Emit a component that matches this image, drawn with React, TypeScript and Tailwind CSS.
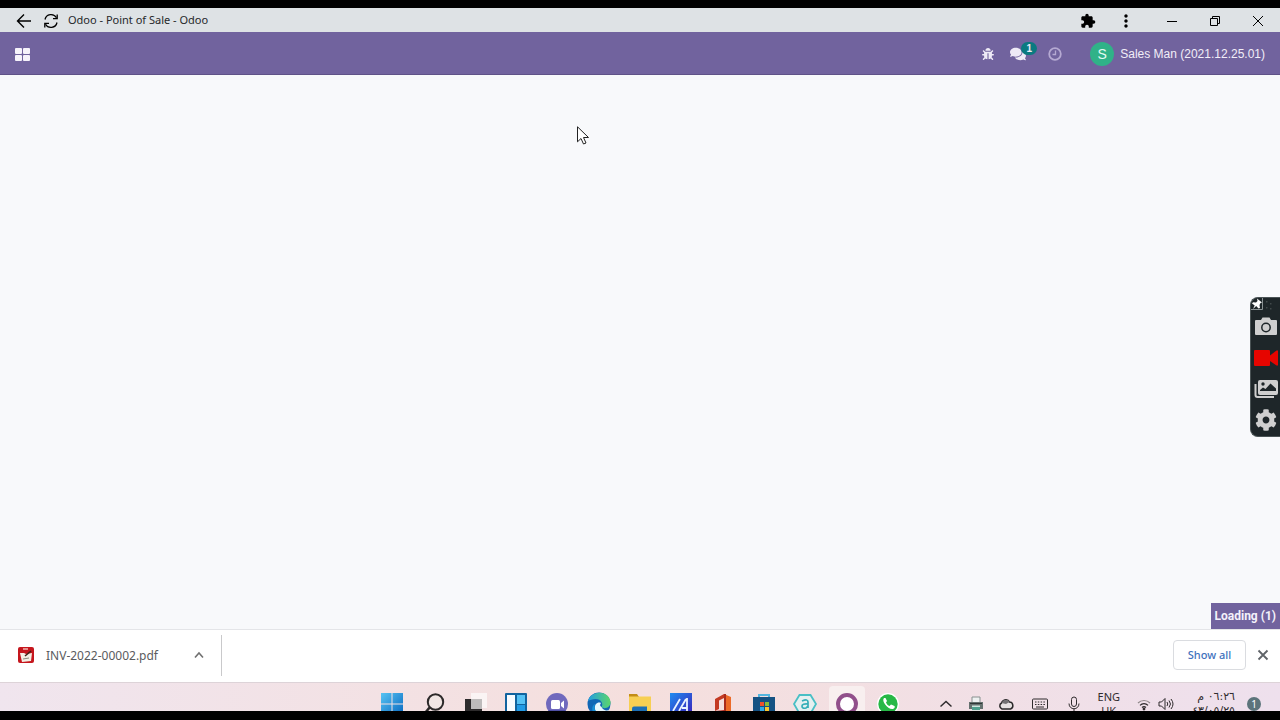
import React from "react";
import { FaBug, FaComments, FaCog } from "react-icons/fa";
import { MdExtension, MdMoreVert } from "react-icons/md";

/* ================= TITLE BAR ================= */
const TitleBar: React.FC = () => (
  <header className="flex h-6 shrink-0 items-center bg-[#dee2e5] pt-px pl-4 text-black">
    <button aria-label="Back" className="w-4">
      <svg viewBox="0 0 16 16" className="h-4 w-4" fill="none" stroke="currentColor" strokeWidth="1.4">
        <path d="M15 8H1.5M8 1.5 1.5 8 8 14.5" />
      </svg>
    </button>
    <button aria-label="Reload" className="ml-[11px] w-4">
      <svg viewBox="0 0 16 16" className="h-4 w-4" fill="none" stroke="currentColor" strokeWidth="1.3">
        <path d="M2 6.5a6.2 6.2 0 0 1 11.5-1.7M14 9.5A6.2 6.2 0 0 1 2.5 11.2" />
        <path d="M14.2 1.5v4.2H10M1.8 14.5v-4.2H6" />
      </svg>
    </button>
    <h1 className="ml-[9px] flex-1 font-['Noto_Sans',sans-serif] text-[11px] text-[#26282a]">Odoo - Point of Sale - Odoo</h1>
    <button aria-label="Extensions" className="w-4">
      <MdExtension className="h-4 w-4" />
    </button>
    <button aria-label="Menu" className="ml-5 w-5">
      <MdMoreVert className="h-5 w-5" />
    </button>
    <div className="mr-px ml-[14px] flex">
      <button aria-label="Minimize" className="flex w-[43px] justify-center">
        <svg viewBox="0 0 12 12" className="h-3 w-3" stroke="currentColor"><path d="M1 6.5h10" /></svg>
      </button>
      <button aria-label="Restore" className="flex w-[43px] justify-center">
        <svg viewBox="0 0 12 12" className="h-3 w-3" fill="none" stroke="currentColor">
          <path d="M1.500 3.500h7v7h-7zM3.500 3.500v-2h7v7h-2" />
        </svg>
      </button>
      <button aria-label="Close" className="flex w-[43px] justify-center">
        <svg viewBox="0 0 12 12" className="h-3 w-3" stroke="currentColor"><path d="m1 1 10 10M11 1 1 11" /></svg>
      </button>
    </div>
  </header>
);

/* ================= ODOO NAVBAR ================= */
const Navbar: React.FC = () => (
  <nav className="flex h-[43px] shrink-0 items-center border-b border-[#5f5287] bg-[#71639e] pt-[2px] pr-[15px] pl-[15px] font-['Liberation_Sans',sans-serif] text-white">
    <button aria-label="Apps" className="mr-auto">
      <svg viewBox="0 0 15 13" className="h-[13px] w-[15px]" fill="#f6f3fb">
        <rect width="7" height="6" rx="1" />
        <rect x="8" width="7" height="6" rx="1" />
        <rect y="7" width="7" height="6" rx="1" />
        <rect x="8" y="7" width="7" height="6" rx="1" />
      </svg>
    </button>
    <button aria-label="Debug" className="text-[#eeeaf6]">
      <FaBug className="h-3 w-3" />
    </button>
    <button aria-label="Messages" className="relative ml-4 text-[#eeeaf6]">
      <FaComments className="h-4 w-4" />
      <span className="absolute -top-1 left-[11px] flex h-[13px] w-4 items-center justify-center rounded-full bg-[#0b7a80] text-[10px] font-bold">1</span>
    </button>
    <button aria-label="Activities" className="ml-[22px] text-[#b5a9d2]">
      <svg viewBox="0 0 14 14" className="h-[14px] w-[14px]" fill="none" stroke="currentColor">
        <circle cx="7" cy="7" r="5.800" strokeWidth="1.800" />
        <path d="M7.500 3.500v4H4.500" strokeWidth="1.300" />
      </svg>
    </button>
    <button className="ml-7 flex items-center gap-[6px] text-[12px]">
      <span className="flex h-6 w-6 items-center justify-center rounded-full bg-[#30b288] text-[14px] text-[#e3fbf2]">S</span>
      <span className="text-[#f1eef8]">Sales Man (2021.12.25.01)</span>
    </button>
  </nav>
);

/* ================= RECORDER PANEL ================= */
const Recorder: React.FC = () => (
  <aside className="absolute top-[222px] right-0 flex h-[140px] w-[30px] flex-col items-center gap-[9px] rounded-l-lg border border-r-0 border-[#4a5355] bg-[#1e2629] text-[#cfcfcf]">
    <button aria-label="Pin" className="flex h-[9px] w-full items-start">
      <svg viewBox="0 0 28 12" className="h-3 w-7 shrink-0">
        <path d="M0 11.500h11.500V0" fill="none" stroke="#8a9294" />
        <path d="m6 .5 5 4-1.500.5-1 2 .5 3-1.500.5-2.300-2.500L2 11l1.700-3.500L1 5.500l1-1.200 3 .2L6.500 3z" fill="#fff" />
        <path d="M15 3h1.500v1.500H15zM19 5h1.500v1.500H19zM15 9h1.500v1.500H15zM19 10h1.500v1.500H19z" fill="#41494b" />
      </svg>
    </button>
    <button aria-label="Screenshot">
      <svg viewBox="0 0 22 22" className="h-[22px] w-[22px]">
        <path d="M1 4h5l1.500-2.500h7L16 4h5a1 1 0 0 1 1 1v13a1 1 0 0 1-1 1H1a1 1 0 0 1-1-1V5a1 1 0 0 1 1-1z" fill="currentColor" />
        <circle cx="11" cy="11.500" r="4.200" fill="none" stroke="#1e2629" strokeWidth="1.500" />
      </svg>
    </button>
    <button aria-label="Record" className="text-[#e60500]">
      <svg viewBox="0 0 24 22" className="h-[22px] w-6" fill="currentColor">
        <path d="M1 3h14a1 1 0 0 1 1 1v4.500L22.500 3.500H24v15h-1.500L16 14v4a1 1 0 0 1-1 1H1a1 1 0 0 1-1-1V4a1 1 0 0 1 1-1z" />
      </svg>
    </button>
    <button aria-label="Gallery">
      <svg viewBox="0 0 24 22" className="h-[22px] w-6">
        <path d="M1.500 6v11a2 2 0 0 0 2 2H20" fill="none" stroke="currentColor" strokeWidth="2" />
        <rect x="4" y="2" width="20" height="15" rx="2" fill="currentColor" />
        <circle cx="9" cy="6" r="1.700" fill="#1e2629" />
        <path d="M6 13v-1l3-2.500 2.500 1.500 5-5.500 5.500 5V13z" fill="#1e2629" />
      </svg>
    </button>
    <button aria-label="Settings">
      <FaCog className="h-[22px] w-[22px]" />
    </button>
  </aside>
);

/* ================= DOWNLOADS ================= */
const DownloadBar: React.FC = () => (
  <section className="flex h-[53px] shrink-0 items-center border-t border-[#e4e5e8] bg-white pb-[2px] font-['Noto_Sans',sans-serif] text-[12px]">
    <div className="flex h-[41px] w-[222px] items-center border-r border-[#c9c9cb] pr-4 pl-[18px]">
      <svg viewBox="0 0 16 16" className="h-4 w-4">
        <rect width="16" height="16" rx="2" fill="#c5161d" />
        <path d="M2 6h4l2 1 6-1-1 8-9 1z" fill="#f4efe4" />
        <path d="M5 2h5" stroke="#f2b7b2" strokeWidth="1.500" />
        <path d="m7 9 6-5" stroke="#3f2418" strokeWidth="1.600" />
        <path d="m5 12 6-1" stroke="#8a8d7f" />
      </svg>
      <a href="#invoice" className="ml-3 flex-1 pt-[2px] text-[#5a5b5e]">INV-2022-00002.pdf</a>
      <button aria-label="File options" className="text-[#707070]">
        <svg viewBox="0 0 12 12" className="h-3 w-3" fill="none" stroke="currentColor" strokeWidth="1.600"><path d="m2 8.500 4-4.500 4 4.500" /></svg>
      </button>
    </div>
    <button className="ml-auto h-[30px] w-[73px] rounded border border-[#dadce0] text-[11px] font-medium text-[#3f72bd]">Show all</button>
    <button aria-label="Close downloads" className="mr-[11px] ml-[11px] text-[#5f6368]">
      <svg viewBox="0 0 12 12" className="h-3 w-3" stroke="currentColor" strokeWidth="1.800"><path d="m1.500 1.500 9 9M10.500 1.500l-9 9" /></svg>
    </button>
  </section>
);

/* ================= TASKBAR ================= */
const apps = [
  {
    name: "Start",
    art: (
      <>
        <defs>
          <linearGradient id="win" x1="0" y1="0" x2="1" y2="1"><stop stopColor="#57c4f3" /><stop offset="1" stopColor="#0868c0" /></linearGradient>
        </defs>
        <path d="M0 0h10.500v10.500H0zM11.500 0H22v10.500H11.500zM0 11.500h10.500V22H0zM11.500 11.500H22V22H11.500z" fill="url(#win)" />
      </>
    ),
  },
  {
    name: "Search",
    art: (
      <>
        <circle cx="13.500" cy="9" r="7.700" fill="#f1e6e4" stroke="#2c2929" strokeWidth="2" />
        <path d="m8 14-5 6" stroke="#2c2929" strokeWidth="2.500" />
      </>
    ),
  },
  {
    name: "Task view",
    art: (
      <>
        <path d="M1 6h17v16H1z" fill="#2d2b2c" />
        <path d="M7 0h16v15H7z" fill="#fbf9f9" fillOpacity=".8" />
        <path d="M7 6h11v10H7z" fill="#bdbbbb" />
      </>
    ),
  },
  {
    name: "Widgets",
    art: (
      <>
        <rect width="22" height="22" rx="1" fill="#11649f" />
        <path d="M2 2h8v20H2z" fill="#f8fcff" />
        <path d="M12 2h8v9h-8z" fill="#55c2f5" />
        <path d="M12 12h8v10h-8z" fill="#219be6" />
      </>
    ),
  },
  {
    name: "Chat",
    art: (
      <>
        <circle cx="11" cy="11" r="11" fill="#7069bd" />
        <path d="M2 17a11 11 0 0 0 18 0z" fill="#5050a5" />
        <rect x="5" y="7" width="9" height="9" rx="1.500" fill="#fff" />
        <path d="m15 10 3-2.500v8L15 13z" fill="#fff" />
      </>
    ),
  },
  {
    name: "Edge",
    art: (
      <>
        <defs>
          <linearGradient id="edge" x1="0" y1="0" x2="1" y2="0"><stop stopColor="#239ee0" /><stop offset="1" stopColor="#5bd66b" /></linearGradient>
        </defs>
        <circle cx="11" cy="11" r="11.500" fill="#1267b5" />
        <path d="M0 8C3-3 21-3 22.500 9c.5 5-6 8-9 5 2-3 0-8-6-8-3 0-6 1-7.500 2z" fill="url(#edge)" />
        <path d="M13.500 14c-2-1-1.500-3-.5-4-5-2-8 4-5 9l6 2c4-1 6-2 7-4-3 1-6 0-7.500-3z" fill="#eaf7fc" />
        <path d="M7 11c-2 6 3 11 8 11l-6 .5C3 20 3 13 7 11z" fill="#1990d5" />
      </>
    ),
  },
  {
    name: "File Explorer",
    art: (
      <>
        <path d="M0 1h8l2 3H0z" fill="#c38d16" />
        <path d="M0 3.500h22V20H0z" fill="#f7cf52" />
        <path d="M3 15.500q0-2 2-2h13v7H3z" fill="#1c6fb5" />
      </>
    ),
  },
  {
    name: "MyASUS",
    art: (
      <>
        <defs>
          <linearGradient id="asus" x1="0" y1="0" x2="1" y2="1"><stop stopColor="#1f8cf0" /><stop offset="1" stopColor="#3b21ba" /></linearGradient>
        </defs>
        <path d="M0 0h22v22H0z" fill="url(#asus)" />
        <path d="m3 18 7-12M9 18l7-12M12 15h5M17 5v13" stroke="#eaf4ff" strokeWidth="1.800" />
      </>
    ),
  },
  {
    name: "Office",
    art: (
      <>
        <path d="M3 6 12 1v4L7 7.500V16l-4 2z" fill="#c33a23" />
        <path d="m12 1 7 3v14l-7 4z" fill="#ec6a28" />
        <path d="m12 1 2 0v20l-2 0z" fill="#a92b1c" />
        <path d="m3 18 9-1v4z" fill="#b72c22" />
      </>
    ),
  },
  {
    name: "Microsoft Store",
    art: (
      <>
        <path d="M6 5V2h10v3" fill="none" stroke="#54b6df" strokeWidth="2" />
        <path d="M0 4h22v16a2 2 0 0 1-2 2H2a2 2 0 0 1-2-2z" fill="#155283" />
        <path d="M7 9h4v4H7z" fill="#f0512b" />
        <path d="M12 9h4v4h-4z" fill="#86bd3a" />
        <path d="M7 14h4v4H7z" fill="#31a9e5" />
        <path d="M12 14h4v4h-4z" fill="#fac62f" />
      </>
    ),
  },
  {
    name: "Armoury",
    art: (
      <>
        <path d="M5.500 2h11L22 11l-5.500 9.500h-11L0 11z" fill="#e5f0f0" stroke="#49bfc5" strokeWidth="1.800" />
        <path d="M8 8q6-2.500 6 1v6m0-4q-6-.5-6 2 0 3 4 2l2-2" fill="none" stroke="#35afb8" strokeWidth="1.700" />
      </>
    ),
  },
  {
    name: "Odoo",
    active: true,
    art: <circle cx="11" cy="11" r="9" fill="#fff" stroke="#91508b" strokeWidth="4" />,
  },
  {
    name: "WhatsApp",
    art: (
      <>
        <circle cx="11" cy="11" r="11" fill="#fff" />
        <circle cx="11" cy="11" r="9.700" fill="#27b846" />
        <path d="M7 5c-3 3 4 12 9 11 2-1 2-2 1.500-3L14 11.500l-1.500 1.500C11 12.500 9.500 11 9 9.500L10 8 8.500 5z" fill="#fff" />
      </>
    ),
  },
];

const Tray: React.FC = () => (
  <div className="flex items-center justify-end pr-[19px] text-[#2f2b2d]">
    <button aria-label="Hidden icons">
      <svg viewBox="0 0 12 12" className="h-3 w-3" fill="none" stroke="currentColor" strokeWidth="1.500"><path d="m.5 8.500 5.500-5 5.500 5" /></svg>
    </button>
    <svg viewBox="0 0 16 16" className="ml-4 h-4 w-4">
      <path d="M4 1h8v6H4z" fill="#eef1f1" stroke="#889190" />
      <path d="M1 6h14v7H1z" fill="#65716f" />
      <path d="M4 9.500h8v5H4z" fill="#cfe6df" />
      <path d="M4 11h8v3H4z" fill="#4fa08e" />
      <path d="M2 7.500h12" stroke="#303737" />
    </svg>
    <svg viewBox="0 0 16 16" className="ml-[14px] h-4 w-4">
      <path d="M4 13a3.300 3.300 0 0 1-.5-6C5 3 10 2.500 11.500 6c4 0 4.500 6 1 7z" fill="#e6e1e1" stroke="#2a2829" strokeWidth="1.500" />
      <path d="M3.500 7C5 3 10 2.500 11.500 6L8 8z" fill="#737173" />
    </svg>
    <svg viewBox="0 0 16 16" className="ml-[18px] h-4 w-4" fill="none" stroke="currentColor">
      <rect x=".5" y="3" width="15" height="10" rx="1" />
      <path d="M3 6h10M3 8.500h10" strokeDasharray="1.500 1.300" />
      <path d="M4 11h8" />
    </svg>
    <svg viewBox="0 0 16 16" className="ml-[18px] h-4 w-4" fill="none" stroke="currentColor">
      <rect x="5.500" y="1" width="5" height="9.500" rx="2.500" />
      <path d="M3 7.500c0 7 10 7 10 0M8 13v3" />
    </svg>
    <button className="ml-4 text-center font-['Noto_Sans',sans-serif] text-[11px] leading-[14px]">
      ENG
      <br />
      UK
    </button>
    <svg viewBox="0 0 16 16" className="ml-4 h-4 w-4" fill="none" stroke="currentColor" strokeWidth="1.200">
      <path d="M2 7a8.500 8.500 0 0 1 12 0" stroke="#8f8789" />
      <path d="M4 9.300a5.600 5.600 0 0 1 8 0M6 11.500a3 3 0 0 1 4 0" />
      <circle cx="8" cy="13" r=".8" fill="currentColor" />
    </svg>
    <svg viewBox="0 0 16 16" className="ml-[6px] h-4 w-4" fill="none" stroke="currentColor">
      <path d="M1 6h2.500L7 2.500v11L3.500 10H1zM9 6q1.500 2 0 4M11 4.500q3 3.500 0 7M13 3q4 5 0 10" />
    </svg>
    <time className="ml-[18px] w-[43px] text-right font-['DejaVu_Sans',sans-serif] text-[11px] leading-[14px] whitespace-nowrap">
      <bdo dir="ltr">م ٠٦:٢٦</bdo>
      <br />
      <bdo dir="ltr">٤٣/٠٥/٢٥</bdo>
    </time>
    <button aria-label="Notifications" className="ml-3 h-[14px] w-[14px] rounded-full bg-[#5c747b] font-['Noto_Sans',sans-serif] text-[10px] leading-[14px] text-white">
      1
    </button>
  </div>
);

const Taskbar: React.FC = () => (
  <footer className="h-[29px] shrink-0 overflow-hidden border-t border-[#ddd3d8] bg-linear-to-r from-[#f0e5ee] via-[#f5dfdd] to-[#eee0ed]">
    <div className="grid h-[42px] grid-cols-[1fr_518px_1fr]">
      <div />
      <div className="flex items-center justify-between">
        {apps.map((app) => (
          <button
            key={app.name}
            aria-label={app.name}
            className={app.active ? "-mx-[7px] rounded-t bg-[#f8efef] px-[7px] py-[7px]" : ""}
          >
            <svg viewBox="0 0 22 22" className="h-[22px] w-[22px] overflow-visible" fill="none">
              {app.art}
            </svg>
          </button>
        ))}
      </div>
      <Tray />
    </div>
  </footer>
);

const App: React.FC = () => {
  return (
    <div className="flex h-screen flex-col overflow-hidden bg-black pt-2 pb-[9px]">
      <TitleBar />
      <Navbar />
      <main className="relative min-h-0 flex-1 bg-[#f8f9fb]">
        {/* Mouse pointer */}
        <svg viewBox="0 0 12 19" className="absolute top-[51px] left-[577px] h-[19px] w-3">
          <path d="M.5.8v15l3.500-3.300 2.500 5.500 2.500-1-2.500-5.500h5z" fill="#fff" stroke="#222" />
        </svg>
        <Recorder />
        <div
          role="status"
          className="absolute right-0 bottom-0 bg-[#71639e] px-1 py-[3px] font-['Roboto',sans-serif] text-[12px] leading-5 font-bold text-[#f4f1fa]"
        >
          Loading (1)
        </div>
      </main>
      <DownloadBar />
      <Taskbar />
    </div>
  );
};

export default App;
